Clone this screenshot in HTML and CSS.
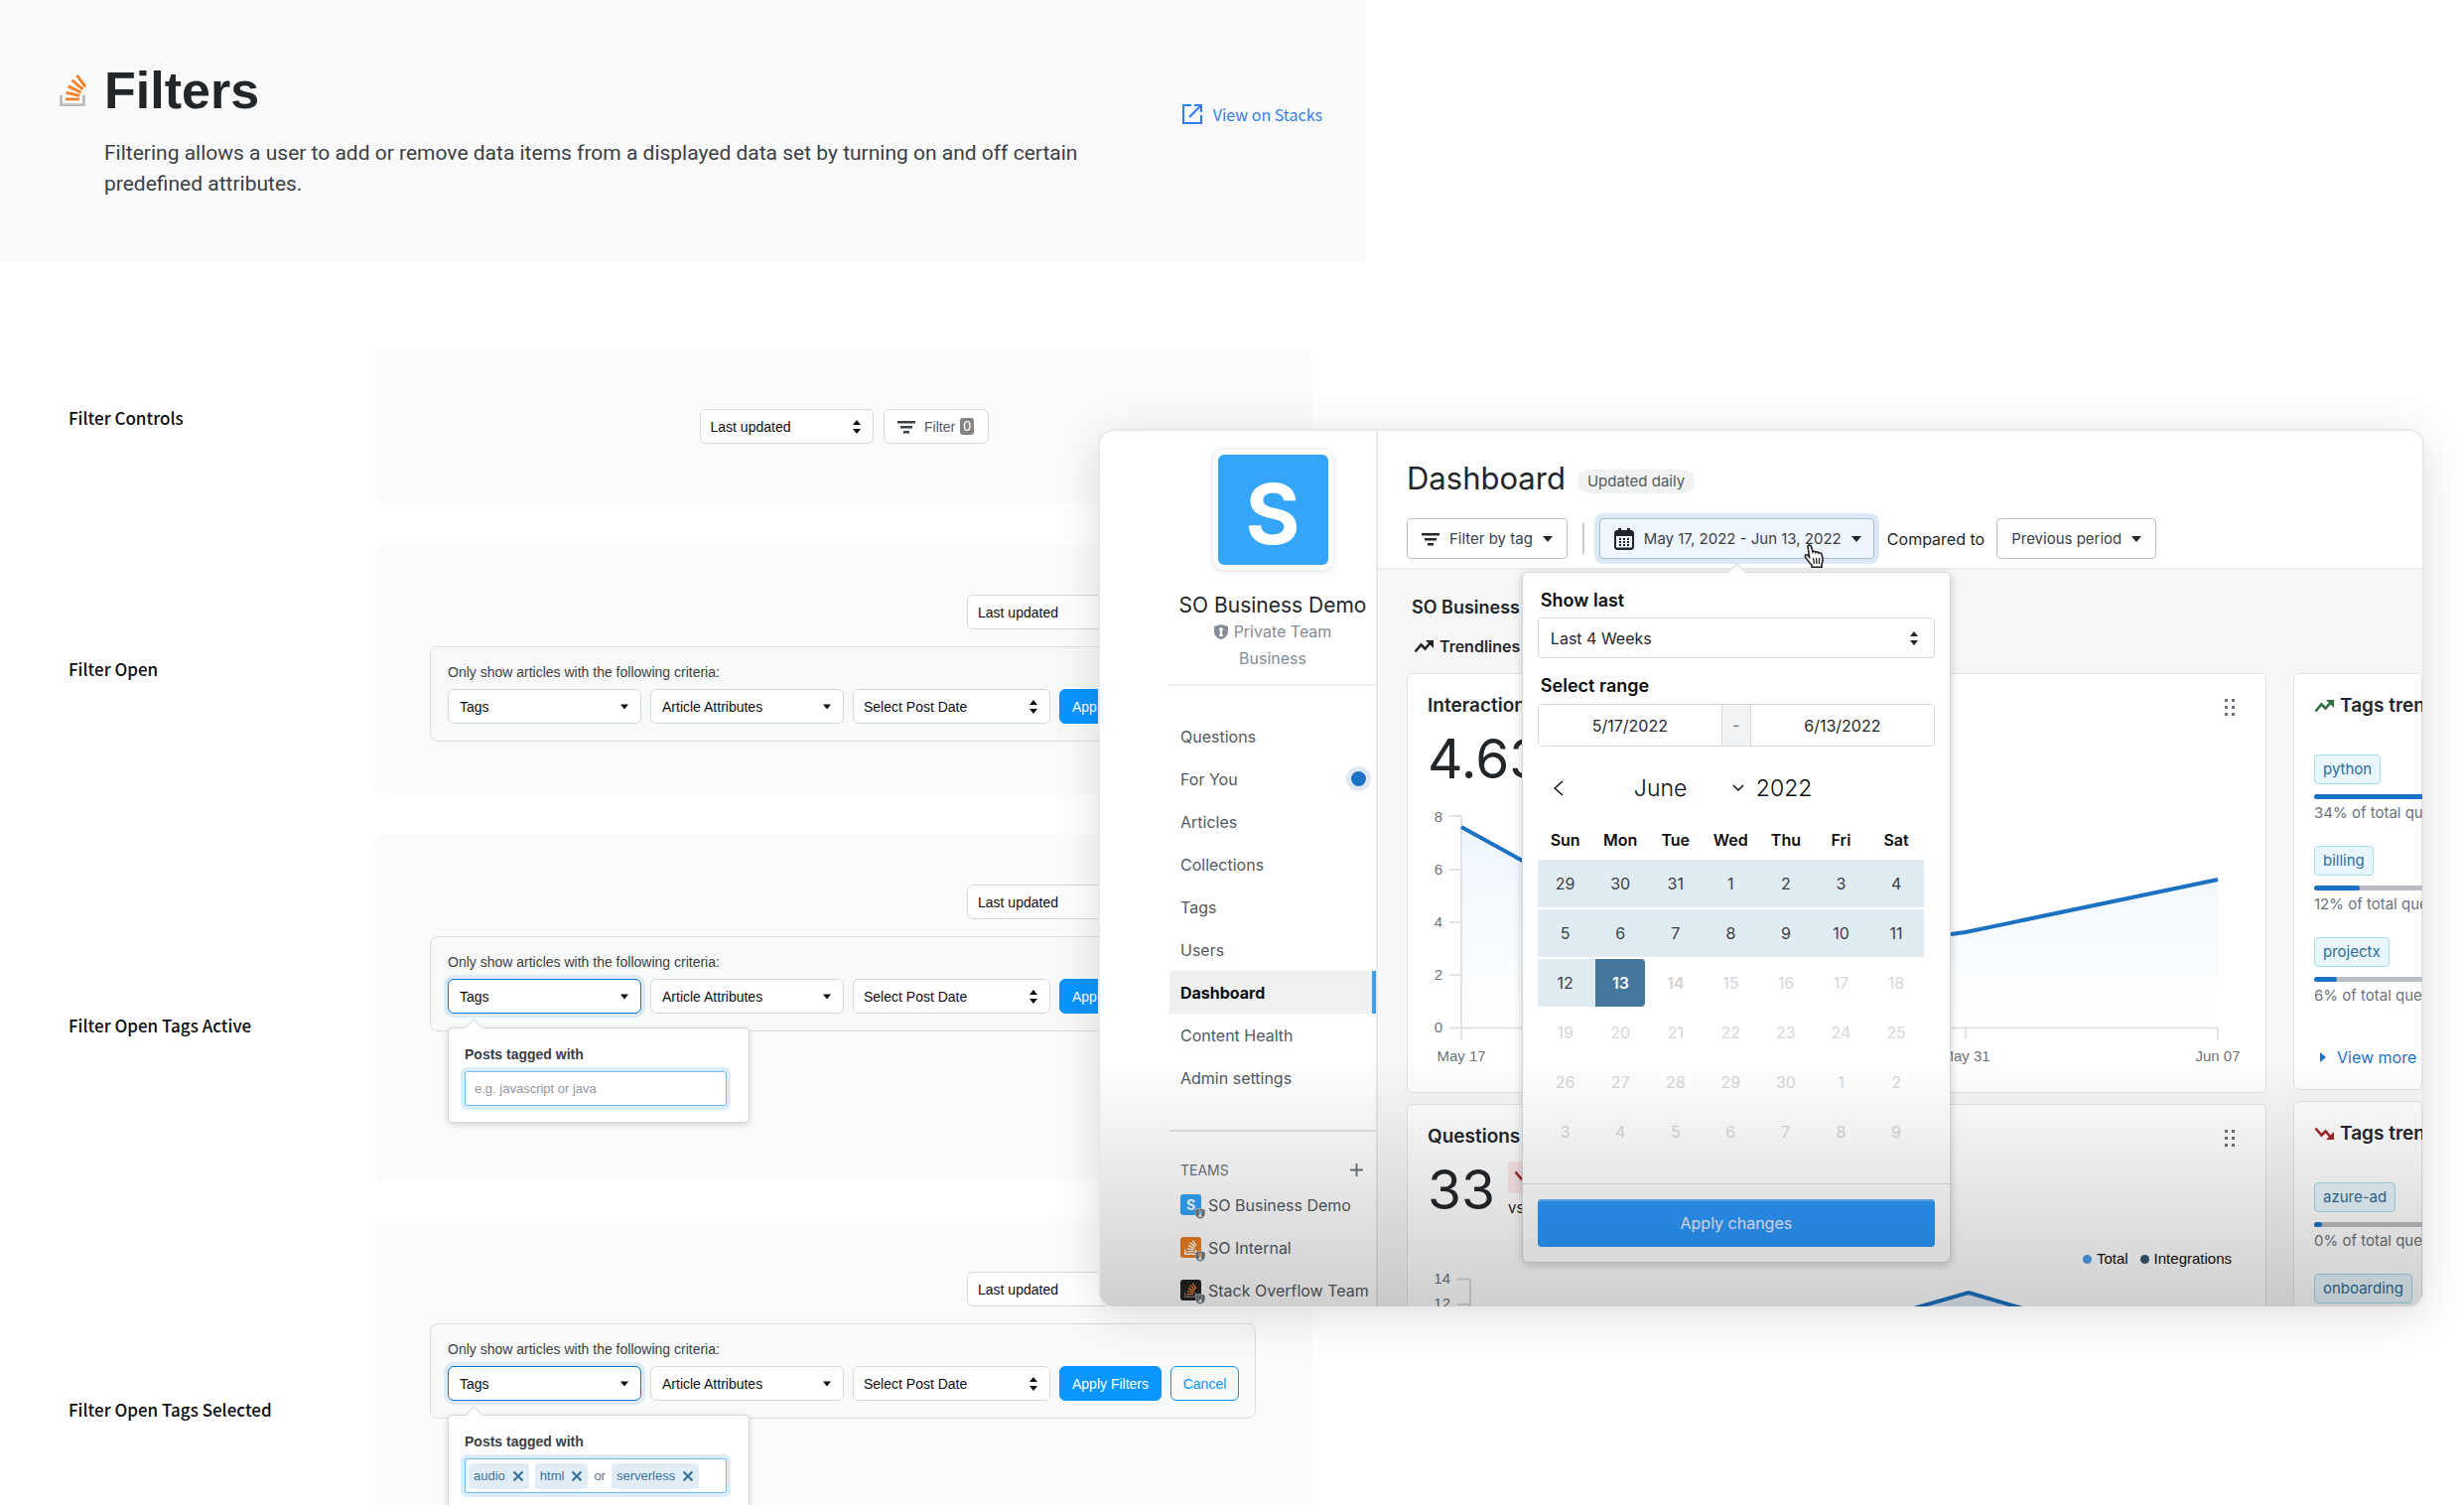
FILE: index.html
```html
<!DOCTYPE html>
<html lang="en">
<head>
<meta charset="utf-8">
<title>Filters</title>
<link rel="stylesheet" href="styles.css">
</head>
<body>
<svg class="defs" aria-hidden="true">
  <symbol id="so-logo" viewBox="22 14 76 88">
    <path class="so-tray" d="M84.4 93.8V70.6h7.7v30.9H22.6V70.6h7.7v23.2z"/>
    <path class="so-stack" d="M38.8 68.4l37.8 7.9 1.6-7.6-37.8-7.9zM43.8 50.4l35 16.3 3.2-7-35-16.4zM53.5 33.2l29.7 24.7 4.9-5.9-29.7-24.7zM72.7 14.9l-6.2 4.6 23 31 6.2-4.6zM38 86h38.6v-7.7H38z"/>
  </symbol>
  <symbol id="filter" viewBox="0 0 18 18"><path d="M0 3h18v2.500H0zM3 8h12v2.500H3zM6 13h6v2.500H6z"/></symbol>
  <symbol id="sort" viewBox="0 0 8 14"><path d="M4 0l4 5H0zM4 14l4-5H0z"/></symbol>
  <symbol id="caret" viewBox="0 0 10 6"><path d="M0 0h10L5 6z"/></symbol>
  <symbol id="shield" viewBox="0 0 14 15"><path fill-rule="evenodd" d="M7 0l7 2v5c0 4-3 7-7 8-4-1-7-4-7-8V2zM7 3a2 2 0 0 0-1 3.700V8L5 12h4L8 8V6.700A2 2 0 0 0 7 3z"/></symbol>
  <symbol id="trend" viewBox="0 0 20 14"><path d="M1.500 12.500l6-7 4 4 6-7" fill="none" stroke="currentColor" stroke-width="2.600"/><path d="M12 1h8v8z"/></symbol>
  <symbol id="cross" viewBox="0 0 12 12"><path d="M1.500 1.500l9 9M10.500 1.500l-9 9" fill="none" stroke="currentColor" stroke-width="2.200"/></symbol>
  <symbol id="grip" viewBox="0 0 10 17"><path d="M0 0h3v3H0zM7 0h3v3H7zM0 7h3v3H0zM7 7h3v3H7zM0 14h3v3H0zM7 14h3v3H7z"/></symbol>
</svg>
<div class="page">
  <main class="docs">
    <header class="intro">
      <svg class="intro-logo"><use href="#so-logo"/></svg>
      <div class="intro-text">
        <h1>Filters</h1>
        <p>Filtering allows a user to add or remove data items from a displayed data set by turning on and off certain predefined attributes.</p>
      </div>
      <a class="view-link" href="#">
        <svg viewBox="0 0 20 20"><path d="M9 1H1v18h18v-8M12 1h7v7M19 1L7 13" fill="none" stroke="currentColor" stroke-width="2.200"/></svg>
        View on Stacks
      </a>
    </header>

    <div class="examples">
      <section class="example">
        <h2 class="raised">Filter Controls</h2>
        <div class="panel panel-controls">
          <span class="select sort-select"><select aria-label="Sort"><option>Last updated</option></select><svg class="sort"><use href="#sort"/></svg></span>
          <button class="btn filter-btn"><svg class="ico"><use href="#filter"/></svg>Filter <span class="count">0</span></button>
        </div>
      </section>

      <section class="example">
        <h2>Filter Open</h2>
        <div class="panel">
          <div class="topline">
            <span class="select sort-select"><select aria-label="Sort"><option>Last updated</option></select><svg class="sort"><use href="#sort"/></svg></span>
            <button class="btn filter-btn"><svg class="ico"><use href="#filter"/></svg>Filter <span class="count">0</span></button>
          </div>
          <form class="criteria">
            <p>Only show articles with the following criteria:</p>
            <div class="fields">
              <div class="field"><button type="button" class="btn drop">Tags<svg><use href="#caret"/></svg></button></div>
              <div class="field"><button type="button" class="btn drop">Article Attributes<svg><use href="#caret"/></svg></button></div>
              <span class="select date-select"><select aria-label="Post date"><option>Select Post Date</option></select><svg class="sort"><use href="#sort"/></svg></span>
              <button type="button" class="btn primary">Apply Filters</button>
              <button type="button" class="btn outline">Cancel</button>
            </div>
          </form>
        </div>
      </section>

      <section class="example">
        <h2 class="lowered">Filter Open Tags Active</h2>
        <div class="panel panel-tall">
          <div class="topline">
            <span class="select sort-select"><select aria-label="Sort"><option>Last updated</option></select><svg class="sort"><use href="#sort"/></svg></span>
            <button class="btn filter-btn"><svg class="ico"><use href="#filter"/></svg>Filter <span class="count">0</span></button>
          </div>
          <form class="criteria">
            <p>Only show articles with the following criteria:</p>
            <div class="fields">
              <div class="field">
                <button type="button" class="btn drop focused">Tags<svg><use href="#caret"/></svg></button>
                <div class="popover">
                  <label for="tags-active">Posts tagged with</label>
                  <input class="tag-input" id="tags-active" type="text" placeholder="e.g. javascript or java">
                </div>
              </div>
              <div class="field"><button type="button" class="btn drop">Article Attributes<svg><use href="#caret"/></svg></button></div>
              <span class="select date-select"><select aria-label="Post date"><option>Select Post Date</option></select><svg class="sort"><use href="#sort"/></svg></span>
              <button type="button" class="btn primary">Apply Filters</button>
              <button type="button" class="btn outline">Cancel</button>
            </div>
          </form>
        </div>
      </section>

      <section class="example">
        <h2>Filter Open Tags Selected</h2>
        <div class="panel panel-taller">
          <div class="topline">
            <span class="select sort-select"><select aria-label="Sort"><option>Last updated</option></select><svg class="sort"><use href="#sort"/></svg></span>
            <button class="btn filter-btn"><svg class="ico"><use href="#filter"/></svg>Filter <span class="count">0</span></button>
          </div>
          <form class="criteria">
            <p>Only show articles with the following criteria:</p>
            <div class="fields">
              <div class="field">
                <button type="button" class="btn drop focused">Tags<svg><use href="#caret"/></svg></button>
                <div class="popover">
                  <strong>Posts tagged with</strong>
                  <div class="tag-input tag-list">
                    <span class="chip">audio<svg><use href="#cross"/></svg></span>
                    <span class="chip">html<svg><use href="#cross"/></svg></span>
                    <span>or</span>
                    <span class="chip">serverless<svg><use href="#cross"/></svg></span>
                  </div>
                </div>
              </div>
              <div class="field"><button type="button" class="btn drop">Article Attributes<svg><use href="#caret"/></svg></button></div>
              <span class="select date-select"><select aria-label="Post date"><option>Select Post Date</option></select><svg class="sort"><use href="#sort"/></svg></span>
              <button type="button" class="btn primary">Apply Filters</button>
              <button type="button" class="btn outline">Cancel</button>
            </div>
          </form>
        </div>
      </section>
    </div>
  </main>

  <section class="window">
    <aside class="side">
      <div class="team">
        <div class="avatar">S</div>
        <h3>SO Business Demo</h3>
        <p><svg class="shield"><use href="#shield"/></svg>Private Team</p>
        <p>Business</p>
      </div>
      <nav class="nav">
        <a href="#">Questions</a>
        <a href="#">For You<i class="dot"></i></a>
        <a href="#">Articles</a>
        <a href="#">Collections</a>
        <a href="#">Tags</a>
        <a href="#">Users</a>
        <a href="#" class="current">Dashboard</a>
        <a href="#">Content Health</a>
        <a href="#">Admin settings</a>
      </nav>
      <div class="teams">
        <div class="teams-head">TEAMS<button aria-label="Add team"><svg viewBox="0 0 14 14"><path d="M7 0v14M0 7h14" stroke="currentColor" stroke-width="2"/></svg></button></div>
        <a href="#"><span class="badge blue">S<svg class="mini"><use href="#shield"/></svg></span>SO Business Demo</a>
        <a href="#"><span class="badge orange"><svg class="logo"><use href="#so-logo"/></svg><svg class="mini"><use href="#shield"/></svg></span>SO Internal</a>
        <a href="#"><span class="badge black"><svg class="logo"><use href="#so-logo"/></svg><svg class="mini"><use href="#shield"/></svg></span>Stack Overflow Team</a>
      </div>
    </aside>

    <div class="dash">
      <header class="dash-head">
        <div class="dash-title"><h2>Dashboard</h2><span class="pill">Updated daily</span></div>
        <div class="toolbar">
          <button class="tool"><svg class="ico"><use href="#filter"/></svg>Filter by tag<svg class="caret"><use href="#caret"/></svg></button>
          <i class="rule"></i>
          <div class="range">
            <button class="tool active"><svg class="cal" viewBox="0 0 20 22"><path fill-rule="evenodd" d="M4 0h3v2h6V0h3v2h2l2 2v16l-2 2H2l-2-2V4l2-2h2zM2 8v11.500h16V8z"/><path d="M5 10h2v2H5zM9 10h2v2H9zM13 10h2v2h-2zM5 13h2v2H5zM9 13h2v2H9zM13 13h2v2h-2zM5 16h2v2H5zM9 16h2v2H9zM13 16h2v2h-2z"/></svg>May 17, 2022 - Jun 13, 2022<svg class="caret"><use href="#caret"/></svg></button>
            <svg class="hand" viewBox="0 0 22 25"><path d="M5 2c1-1.500 3-1 3.500.500L10 8c.500-1 2.500-1 3 .500.500-1 2.500-.800 3 .700.700-.800 2.500-.500 3 1l1 4c.500 3-.500 4.500-1 6v3H9v-2c-2-2-4-4-6.500-8-1-2 .500-3 2-2l2 2z" fill="#fff" stroke="#222" stroke-width="1.600"/><path d="M10.500 14l1 6M13.500 14l.500 6M16.500 14v6" stroke="#222" stroke-width="1.300"/></svg>
            <div class="picker">
              <div class="picker-body">
                <label for="last">Show last</label>
                <span class="select"><select id="last"><option>Last 4 Weeks</option></select><svg class="sort"><use href="#sort"/></svg></span>
                <label for="from">Select range</label>
                <div class="dates"><input id="from" type="text" value="5/17/2022"><span>-</span><input type="text" aria-label="End date" value="6/13/2022"></div>
                <div class="month">
                  <button class="prev" aria-label="Previous month"><svg viewBox="0 0 10 16"><path d="M9 1L1 8l8 7" fill="none" stroke="currentColor" stroke-width="1.500"/></svg></button>
                  <span class="month-name">June</span>
                  <svg class="chev" viewBox="0 0 12 8"><path d="M1 1l5 5 5-5" fill="none" stroke="currentColor" stroke-width="1.500"/></svg>
                  <span>2022</span>
                </div>
                <table>
                  <thead><tr><th>Sun</th><th>Mon</th><th>Tue</th><th>Wed</th><th>Thu</th><th>Fri</th><th>Sat</th></tr></thead>
                  <tbody>
                    <tr class="in"><td>29</td><td>30</td><td>31</td><td>1</td><td>2</td><td>3</td><td>4</td></tr>
                    <tr class="in"><td>5</td><td>6</td><td>7</td><td>8</td><td>9</td><td>10</td><td>11</td></tr>
                    <tr class="off"><td class="on">12</td><td class="end"><span>13</span></td><td><b>14</b></td><td>15</td><td>16</td><td>17</td><td>18</td></tr>
                    <tr class="off"><td>19</td><td>20</td><td>21</td><td>22</td><td>23</td><td>24</td><td>25</td></tr>
                    <tr class="off"><td>26</td><td>27</td><td>28</td><td>29</td><td>30</td><td>1</td><td>2</td></tr>
                    <tr class="off"><td>3</td><td>4</td><td>5</td><td>6</td><td>7</td><td>8</td><td>9</td></tr>
                  </tbody>
                </table>
              </div>
              <div class="picker-foot"><button>Apply changes</button></div>
            </div>
          </div>
          <span class="compared">Compared to</span>
          <button class="tool">Previous period<svg class="caret"><use href="#caret"/></svg></button>
        </div>
      </header>

      <div class="dash-body">
        <h3 class="sub">SO Business</h3>
        <h4 class="trendlines"><svg class="trend"><use href="#trend"/></svg>Trendlines</h4>
        <div class="cards">
          <div class="col">
            <article class="card">
              <div class="card-head"><h3>Interactions</h3><svg class="grip"><use href="#grip"/></svg></div>
              <div class="figure"><span class="big">4.63</span></div>
              <svg class="chart" width="864" height="296" viewBox="0 0 864 296">
                <defs><linearGradient id="area" x1="0" y1="0" x2="0" y2="1"><stop offset="0" stop-color="#eef6fd"/><stop offset="1" stop-color="#ffffff"/></linearGradient></defs>
                <path d="M54 29L308 169 562 135 816 82V231H54z" fill="url(#area)"/>
                <path d="M42 18h12v225M42 72h12M42 125h12M42 178h12M42 231.500h774v12M562 231v12" fill="none" stroke="#e2e3e4" stroke-width="2"/>
                <path d="M54 29L308 169 562 135 816 82" fill="none" stroke="#1b72c4" stroke-width="4"/>
                <g text-anchor="end"><text x="35" y="24">8</text><text x="35" y="77">6</text><text x="35" y="130">4</text><text x="35" y="183">2</text><text x="35" y="236">0</text></g>
                <g text-anchor="middle"><text x="54" y="265">May 17</text><text x="562" y="265">May 31</text><text x="816" y="265">Jun 07</text></g>
              </svg>
            </article>
            <article class="card">
              <div class="card-head"><h3>Questions</h3><svg class="grip"><use href="#grip"/></svg></div>
              <div class="figure"><span class="big">33</span><span class="delta"><span class="down"><svg class="trend"><use href="#trend"/></svg></span><span>vs</span></span></div>
              <div class="legend"><span class="total">Total</span><span class="integrations">Integrations</span></div>
              <svg class="chart" width="864" height="60" viewBox="0 0 864 60">
                <path d="M308 98L565 24 816 98z" fill="#e6eef6"/>
                <path d="M50 10.500h13v50M50 36h13" fill="none" stroke="#dcdcdc" stroke-width="2"/>
                <path d="M308 98L565 24 816 98" fill="none" stroke="#1b72c4" stroke-width="4"/>
                <g text-anchor="end"><text x="43" y="15">14</text><text x="43" y="40">12</text></g>
              </svg>
            </article>
          </div>
          <div class="col">
            <article class="card">
              <div class="card-head"><h3><svg class="trend up"><use href="#trend"/></svg>Tags trending up</h3></div>
              <ul>
                <li><a href="#" class="tag">python</a><div class="bar"><i style="width:34%"></i></div>34% of total questions</li>
                <li><a href="#" class="tag">billing</a><div class="bar"><i style="width:12%"></i></div>12% of total questions</li>
                <li><a href="#" class="tag">projectx</a><div class="bar"><i style="width:6%"></i></div>6% of total questions</li>
              </ul>
              <a href="#" class="more"><svg viewBox="0 0 6 10"><path d="M0 0l6 5-6 5z"/></svg>View more</a>
            </article>
            <article class="card">
              <div class="card-head"><h3><svg class="trend fall"><use href="#trend"/></svg>Tags trending down</h3></div>
              <ul>
                <li><a href="#" class="tag">azure-ad</a><div class="bar"><i style="width:2%"></i></div>0% of total questions</li>
                <li><a href="#" class="tag">onboarding</a><div class="bar"><i style="width:2%"></i></div>0% of total questions</li>
              </ul>
            </article>
          </div>
        </div>
      </div>
    </div>
    <div class="fade"></div>
  </section>
</div>
</body>
</html>
```
FILE: styles.css
```css
* { box-sizing: border-box; }
body { margin: 0; background: #fff; font-family: "Liberation Sans", Arial, sans-serif; font-size: 14px; color: #0c0d0e; }
h1, h2, h3, h4, p, ul { margin: 0; padding: 0; }
button, input, select { font: inherit; color: inherit; margin: 0; }
svg { display: block; flex: none; fill: currentColor; }
a { text-decoration: none; color: inherit; }
.defs { position: absolute; width: 0; height: 0; }
.so-tray { fill: var(--tray, #bcbbbb); }
.so-stack { fill: var(--stack, #f48023); }

.page { position: relative; height: 100vh; overflow: hidden; }
.docs { max-width: 1376px; }

/* Intro banner */
.intro { display: flex; align-items: flex-start; height: 264px; padding: 60px 44px 0 60px; background: #fafafa; }
.intro-logo { width: 28px; height: 34px; margin: 14px 17px 0 0; }
.intro-text { flex: 1; }
.intro h1 { font-size: 52px; line-height: 62px; color: #232629; }
.intro p { max-width: 1000px; margin-top: 17px; font-family: Roboto, sans-serif; font-size: 21px; line-height: 31px; color: #3b4045; }
.view-link { display: flex; align-items: center; gap: 11px; margin-top: 43px; font-family: "Noto Sans CJK SC", "Noto Sans", sans-serif; font-size: 16px; line-height: 24px; color: #2f80ed; }
.view-link svg { width: 20px; height: 20px; }

/* Example rows */
.examples { display: grid; gap: 42px; padding: 88px 56px 0 69px; }
.example { display: grid; grid-template-columns: 310px 1fr; align-items: center; }
.example h2 { font-family: "Noto Sans CJK SC", "Noto Sans", sans-serif; font-size: 17px; line-height: 24px; font-weight: 500; }
.example .raised { padding-bottom: 18px; }
.example .lowered { padding-top: 36px; }
.panel { padding: 50px 56px 52px 54px; background: #fbfbfb; border-radius: 8px; }
.panel-controls { display: flex; justify-content: center; gap: 10px; padding: 60px 0; }
.panel-tall { padding-bottom: 150px; }
.panel-taller { padding-bottom: 180px; }
.topline { display: flex; justify-content: flex-end; gap: 10px; margin-bottom: 17px; }

.select { position: relative; display: block; }
.select select { appearance: none; width: 100%; height: 35px; padding: 0 10px; background: #fff; border: 1px solid #d6d9dc; border-radius: 6px; }
.select .sort { position: absolute; right: 13px; top: 50%; width: 8px; height: 14px; margin-top: -7px; pointer-events: none; }
.sort-select { width: 175px; }
.date-select { width: 199px; }

.btn { display: flex; align-items: center; justify-content: center; height: 35px; padding: 0 11px; background: #fff; border: 1px solid #d6d9dc; border-radius: 6px; white-space: nowrap; }
.filter-btn { width: 106px; color: #525960; }
.filter-btn .ico { width: 18px; height: 18px; margin-right: 9px; color: #3b4045; }
.count { margin-left: 5px; padding: 0 3px; background: #838383; color: #fff; border-radius: 3px; line-height: 17px; }
.drop { width: 195px; padding-right: 12px; justify-content: space-between; }
.drop svg { width: 8px; height: 6px; }
.focused { border-color: #0077cc; box-shadow: 0 0 0 4px #deeaf4; }
.primary { width: 103px; padding: 0; background: #0a95ff; border-color: #0a95ff; color: #fff; }
.outline { width: 69px; padding: 0; background: transparent; border-color: #0a95ff; color: #0a95ff; }

.criteria { padding: 16px 16px 17px 17px; background: #f8f9f9; border: 1px solid #dcdfe1; border-radius: 8px; }
.criteria p { line-height: 19px; margin-bottom: 7px; color: #3b4045; }
.fields { display: flex; gap: 9px; }
.field { position: relative; }

.popover { position: absolute; z-index: 1; top: 49px; left: 0; width: 304px; padding: 17px 16px 16px; background: #fff; border: 1px solid #d6d9dc; border-radius: 5px; box-shadow: 0 2px 6px rgba(0, 0, 0, .16); }
.popover::before, .picker::before { content: ""; position: absolute; width: 12px; height: 12px; background: #fff; border: 1px solid #d6d9dc; border-width: 1px 0 0 1px; transform: rotate(45deg); }
.popover::before { top: -7px; left: 19px; }
.popover label, .popover strong { display: block; line-height: 19px; margin-bottom: 7px; font-weight: 700; color: #3b4045; }
.tag-input { width: 264px; height: 35px; padding: 0 9px; background: #fff; border: 1px solid #6bbbf7; border-radius: 3px; box-shadow: 0 0 0 4px #d9edfd; font-size: 13px; outline: 0; }
.tag-input::placeholder { color: #8f969c; }
.tag-list { display: flex; align-items: center; gap: 6px; padding: 0 3px; color: #6a737c; }
.chip { display: flex; align-items: center; gap: 7px; height: 26px; padding: 0 5px; background: #e1ecf4; color: #39739d; border-radius: 3px; }
.chip svg { width: 12px; height: 12px; }

/* Floating dashboard window */
.window { position: absolute; top: 432px; left: 1106px; right: 40px; height: 886px; display: grid; grid-template-columns: 280px 1fr; overflow: hidden; background: #fff; border: 2px solid #e9e9e9; border-radius: 16px; box-shadow: 0 8px 48px rgba(0, 0, 0, .13); font-family: Inter, sans-serif; font-size: 16px; color: #232629; }
.fade { position: absolute; z-index: 5; left: 0; right: 0; bottom: 0; height: 250px; background: linear-gradient(rgba(0, 0, 0, 0), rgba(0, 0, 0, .19)); pointer-events: none; }

.side { padding-left: 70px; border-right: 2px solid #e6e7ea; }
.team { display: flex; flex-direction: column; align-items: center; padding: 19px 0 12px; border-bottom: 2px solid #eff0f1; color: #838c95; }
.avatar { display: grid; place-items: center; width: 121px; height: 121px; padding-top: 8px; background: #34a5f8; border: 5px solid #fff; border-radius: 11px; box-shadow: 0 1px 6px rgba(0, 0, 0, .14); color: #fff; font-size: 84px; font-weight: 700; line-height: 1; }
.team h3 { margin-top: 23px; font-size: 21px; line-height: 26px; font-weight: 400; color: #232629; white-space: nowrap; }
.team p { display: flex; align-items: center; gap: 6px; line-height: 27px; }
.shield { width: 14px; height: 15px; }
.nav { padding-top: 29px; padding-bottom: 31px; border-bottom: 2px solid #e4e6e8; }
.nav a, .teams a { display: flex; align-items: center; height: 43px; padding-left: 11px; color: #525960; white-space: nowrap; }
.nav .current { background: #eff0f0; border-right: 4px solid #409fe8; color: #0c0d0e; font-weight: 700; }
.dot { width: 15px; height: 15px; margin: 0 10px 0 auto; background: #1b72c4; border-radius: 50%; box-shadow: 0 0 0 5px #dfe9f5; }
.teams { padding-top: 24px; }
.teams-head { display: flex; align-items: center; justify-content: space-between; height: 28px; padding: 0 13px 0 11px; font-size: 14px; color: #6a737c; }
.teams-head button { padding: 0; border: 0; background: none; }
.teams-head svg { width: 13px; height: 13px; }
.teams a { gap: 7px; }
.badge { position: relative; display: grid; place-items: center; flex: none; width: 21px; height: 21px; border-radius: 3px; color: #fff; font-size: 14px; font-weight: 700; }
.badge .logo { width: 13px; height: 15px; }
.badge .mini { position: absolute; right: -4px; bottom: -4px; width: 10px; height: 11px; overflow: visible; color: #6a737c; stroke: #e8e8e8; stroke-width: 1; }
.blue { background: #34a5f8; }
.orange { background: #e87f26; --tray: #fff; --stack: #fff; }
.black { background: #222; --tray: #777; }

.dash { min-width: 0; background: #f7f7f7; }
.dash-head { height: 140px; padding: 28px 0 0 29px; background: #fff; border-bottom: 2px solid #ededef; }
.dash-title { display: flex; align-items: center; gap: 12px; height: 40px; margin-bottom: 20px; }
.dash-title h2 { font-size: 31px; line-height: 40px; font-weight: 400; }
.pill { height: 24px; margin-top: 6px; padding: 0 10px; background: #f0f1f1; border-radius: 12px; font-size: 15px; line-height: 24px; color: #525960; }
.toolbar { display: flex; align-items: center; white-space: nowrap; }
.tool { display: flex; align-items: center; gap: 10px; height: 41px; padding: 0 14px; background: #fff; border: 1px solid #babfc4; border-radius: 4px; font-size: 15px; color: #3b4045; }
.tool .ico { width: 18px; height: 18px; color: #232629; }
.tool .cal { width: 20px; height: 22px; color: #232629; }
.caret { width: 10px; height: 6px; color: #232629; }
.rule { width: 2px; height: 31px; margin: 0 15px; background: #c8ccd0; }
.range { position: relative; }
.active { width: 277px; background: #eff6fd; border-color: #a9bccd; box-shadow: 0 0 0 5px #dce8f5; }
.hand { position: absolute; z-index: 4; left: 205px; top: 26px; width: 22px; height: 25px; }
.compared { margin: 0 12px 0 13px; }

.picker { position: absolute; z-index: 3; top: 54px; left: -78px; width: 432px; background: #fff; border: 1px solid #d6d9dc; border-radius: 6px; box-shadow: 0 2px 10px rgba(0, 0, 0, .2); }
.picker::before { top: -7px; left: 209px; }
.picker-body { padding: 17px 15px 26px; }
.picker label { display: block; padding-left: 3px; font-size: 18px; line-height: 22px; font-weight: 600; color: #0c0d0e; }
.picker .select { margin: 6px 0 17px; }
.picker .select select { height: 41px; padding: 0 12px; border-radius: 4px; }
.picker .select .sort { right: 17px; }
.dates { display: flex; height: 43px; margin-top: 7px; border: 1px solid #d6d9dc; border-radius: 4px; overflow: hidden; }
.dates input { flex: 1; min-width: 0; border: 0; background: #fff; text-align: center; }
.dates span { width: 30px; background: #f1f2f3; border: 1px solid #d6d9dc; border-width: 0 1px; text-align: center; line-height: 41px; color: #6a737c; }
.month { display: flex; align-items: center; height: 48px; margin-top: 18px; padding-left: 16px; font-size: 23px; font-weight: 300; color: #0c0d0e; }
.prev { padding: 0; border: 0; background: none; }
.prev svg { width: 10px; height: 16px; }
.month-name { width: 99px; margin-left: 71px; }
.chev { width: 12px; height: 8px; margin-right: 12px; }
.picker table { width: 389px; margin-top: 8px; table-layout: fixed; border-spacing: 0 2px; text-align: center; }
.picker th { height: 36px; padding: 0; font-size: 16px; font-weight: 600; color: #0c0d0e; }
.picker td { height: 48px; padding: 0; color: #3b4045; }
.in td, td.on { background: #e1ebf2; }
.picker .off td { color: #d5d7d9; }
.picker .off td.on { color: #3b4045; }
.picker .off td.end { background: linear-gradient(90deg, #e1ebf2 30%, transparent 30%); color: #fff; }
.end span { display: block; width: 50px; margin-left: 3px; border-radius: 0 4px 4px 0; background: #45769b; line-height: 48px; font-weight: 600; }
.picker-foot { padding: 15px; border-top: 1px solid #dcdcdc; }
.picker-foot button { width: 100%; height: 48px; border: 0; border-radius: 4px; background: #2c97fb; box-shadow: inset 0 2px 0 #5eb0fb; color: #eef; }

.dash-body { padding: 25px 0 0 29px; }
.dash-body h3 { font-size: 19px; line-height: 26px; font-weight: 600; }
.dash-body .sub { padding-left: 5px; font-size: 18px; }
.trendlines { display: flex; align-items: center; gap: 6px; height: 24px; margin: 14px 0 15px; padding-left: 7px; font-size: 16px; font-weight: 600; }
.trend { width: 20px; height: 14px; }
.cards { display: grid; grid-template-columns: 866px 1fr; gap: 27px; white-space: nowrap; }
.col { display: grid; gap: 11px; align-content: start; min-width: 0; }
.card { min-width: 0; background: #fff; border: 1px solid #e1e2e4; border-radius: 6px; }
.card-head { display: flex; justify-content: space-between; padding: 19px 31px 0 20px; }
.card-head h3 { display: flex; align-items: center; gap: 6px; }
.grip { width: 10px; height: 17px; margin-top: 6px; color: #6a737c; }
.figure { display: flex; align-items: center; gap: 13px; height: 80px; padding-left: 20px; }
.big { font-size: 55px; line-height: 80px; }
.delta { display: grid; gap: 5px; line-height: 20px; font-size: 15px; }
.down { display: flex; align-items: center; height: 32px; padding: 0 6px; border-radius: 4px; background: #fbe8e8; color: #a0282c; }
.down .trend, .fall { transform: scaleY(-1); }
.up { color: #2f6f44; }
.fall { color: #a0282c; }
.chart text { font-family: "Liberation Sans", Arial, sans-serif; font-size: 15px; fill: #6a737c; }
.legend { display: flex; justify-content: flex-end; gap: 12px; margin-top: 20px; padding-right: 34px; font-family: "Liberation Sans", Arial, sans-serif; font-size: 15px; line-height: 20px; color: #0c0d0e; }
.legend span { display: flex; align-items: center; gap: 5px; }
.legend span::before { content: ""; width: 9px; height: 9px; border-radius: 50%; background: #4a9fea; }
.legend .integrations::before { background: #2f5573; }
.col ul { list-style: none; padding: 36px 0 0 20px; }
.col li { margin-bottom: 23px; font-size: 15px; line-height: 20px; color: #6a737c; }
.tag { display: block; width: max-content; height: 30px; padding: 0 8px; background: #e9f6fd; border: 1px solid #a5dcf2; border-radius: 4px; line-height: 28px; color: #2c6d99; }
.bar { width: 380px; height: 5px; margin: 10px 0 4px; background: #babdc1; border-radius: 3px; }
.bar i { display: block; height: 5px; background: #1b72c4; border-radius: 3px; }
.more { display: flex; align-items: center; gap: 11px; padding: 17px 0 20px 26px; line-height: 24px; color: #1b72c4; }
.more svg { width: 6px; height: 10px; }
```
